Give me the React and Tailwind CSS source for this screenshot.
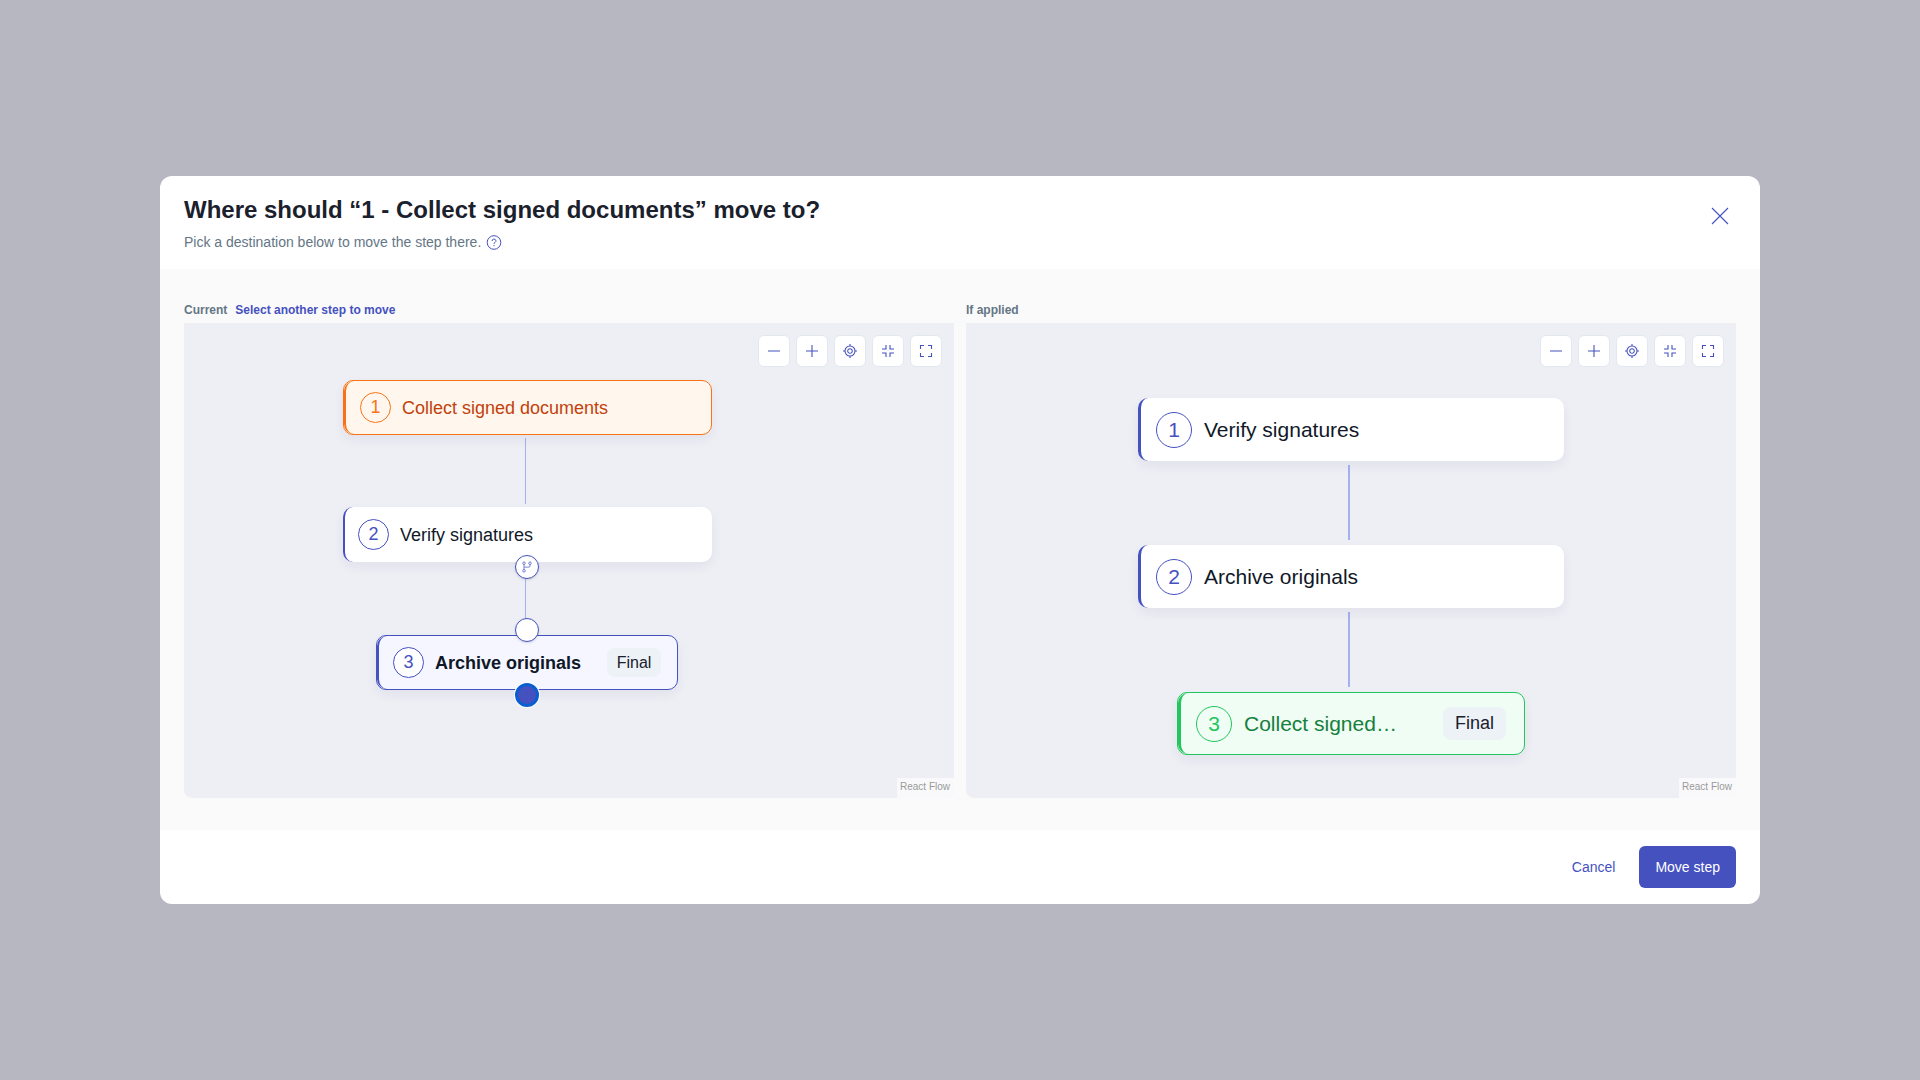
import React from 'react';
import { clsx } from 'clsx';

const tones = {
  default: {
    box: 'bg-white',
    bar: 'border-[#4551bf]',
    number: 'border-[#4551bf] text-[#4551bf] bg-white',
    label: 'text-[#101828]',
  },
  source: {
    box: 'border border-[#f97316] bg-[#fff7ed]',
    bar: 'border-[#f97316]',
    number: 'border-[#f97316] text-[#f97316]',
    label: 'text-[#c2410c]',
  },
  target: {
    box: 'border border-[#4551bf] bg-[#f5f6ff]',
    bar: 'border-[#4551bf]',
    number: 'border-[#4551bf] text-[#4551bf] bg-white',
    label: 'text-[#101828] font-bold',
  },
  result: {
    box: 'border border-[#22c55e] bg-[#f0fdf4]',
    bar: 'border-[#22c55e]',
    number: 'border-[#22c55e] text-[#22c55e]',
    label: 'text-[#15803d]',
  },
};

// className carries the node's place and width on the canvas
const StepNode = ({ number, label, tone = 'default', large, final, className }) => {
  const t = tones[tone];

  return (
    <div
      className={clsx(
        'absolute rounded-[10px] shadow-[0_5px_12px_rgba(30,35,70,0.06)]',
        large ? 'h-[63px]' : 'h-[55px]',
        t.box,
        className
      )}
    >
      <div
        className={clsx(
          'flex h-full items-center rounded-[10px]',
          large ? 'gap-3 border-l-3 pl-[15px] pr-[18px]' : 'gap-[11px] border-l-2 pr-4',
          !large && (tone === 'default' ? 'pl-[13px]' : 'pl-[14px]'),
          t.bar
        )}
      >
        <span
          className={clsx(
            'flex shrink-0 items-center justify-center rounded-full border',
            large ? 'size-9 text-[21px]' : 'size-[31px] text-[18px]',
            t.number
          )}
        >
          {number}
        </span>
        <span className={clsx('whitespace-nowrap', large ? 'text-[21px]' : 'pt-0.5 text-[18px]', t.label)}>{label}</span>
        {final && (
          <span
            className={clsx(
              'ml-auto flex items-center justify-center rounded-lg bg-[#edf2f7] text-[#1a202c]',
              large ? 'h-[33px] w-[63px] text-[18px]' : 'h-[29px] w-[54px] text-[16px]'
            )}
          >
            Final
          </span>
        )}
      </div>
    </div>
  );
};

const Edge = ({ className }) => <div className={clsx('absolute bg-[#a5b0f3]', className)} />;

const controls = [
  { label: 'Zoom out', d: 'M2 8h12' },
  { label: 'Zoom in', d: 'M2 8h12M8 2v12' },
  {
    label: 'Center view',
    d: 'M8 3a5 5 0 1 0 0 10a5 5 0 1 0 0-10M8 5.7a2.3 2.3 0 1 0 0 4.6a2.3 2.3 0 1 0 0-4.6M8 1v2.5M8 12.5v2.5M1 8h2.5M12.5 8h2.5',
  },
  { label: 'Collapse', d: 'M6 2v4H2M10 2v4h4M6 14v-4H2M10 14v-4h4' },
  { label: 'Fit to view', d: 'M6 2.5H2.5V6M10 2.5h3.5V6M6 13.5H2.5V10M10 13.5h3.5V10' },
];

const Toolbar = () => (
  <div className="flex justify-end gap-1.5 p-3">
    {controls.map((c) => (
      <button
        key={c.label}
        type="button"
        aria-label={c.label}
        className="flex size-8 items-center justify-center rounded-md border border-[#e2e8f0] bg-white text-[#4551bf]"
      >
        <svg width="16" height="16" viewBox="0 0 16 16" fill="none" stroke="currentColor" strokeWidth="1.1">
          <path d={c.d} />
        </svg>
      </button>
    ))}
  </div>
);

const Canvas = ({ children }) => (
  <div className="relative flex h-[475px] flex-col justify-between overflow-hidden rounded-b-lg bg-[#eeeff5]">
    <Toolbar />
    {children}
    <a href="#" className="self-end bg-[#f9f9fb] pb-1 pl-[3px] pr-1 pt-0.5 text-[10px] leading-[14px] text-[#999]">
      React Flow
    </a>
  </div>
);

const handle = 'absolute flex size-6 items-center justify-center rounded-full';

const App = () => (
  <div className="flex min-h-screen items-center justify-center bg-[#b7b7c1] px-40 font-['Liberation_Sans',Arial,sans-serif]">
    <div role="dialog" aria-labelledby="move-title" className="w-full rounded-xl bg-white">
      <header className="flex items-start justify-between border-b border-white px-6 py-4">
        <div>
          <h2 id="move-title" className="text-[24px] font-bold leading-9 text-[#1a202c]">
            Where should “1 - Collect signed documents” move to?
          </h2>
          <p className="mt-1 flex items-center gap-[5px] text-[14px] leading-5 text-[#647685]">
            Pick a destination below to move the step there.
            <svg width="16" height="16" viewBox="0 0 16 16" fill="none" stroke="#4551bf" strokeWidth="1">
              <circle cx="8" cy="8.5" r="6.8" />
              <path d="M6.1 7a1.9 1.9 0 1 1 2.8 1.6c-.6.3-.9.6-.9 1.3" />
              <path d="M8 11v1.1" />
            </svg>
          </p>
        </div>
        <button type="button" aria-label="Close" className="mt-2 flex size-8 items-center justify-center text-[#4551bf]">
          <svg width="18" height="18" viewBox="0 0 18 18" stroke="currentColor" strokeWidth="1.1">
            <path d="M1 1l16 16M17 1L1 17" />
          </svg>
        </button>
      </header>

      <main className="grid grid-cols-2 gap-3 bg-[#fafafa] px-6 py-8">
        <section>
          <div className="mb-1 flex gap-2 text-[12px] font-bold leading-[18px]">
            <span className="text-[#647685]">Current</span>
            <button type="button" className="text-[#4551bf]">Select another step to move</button>
          </div>
          <Canvas>
            <Edge className="left-[341px] top-[115px] h-[66px] w-px" />
            <Edge className="left-[341px] top-[242px] h-[66px] w-px" />
            <StepNode number={1} label="Collect signed documents" tone="source" className="left-[159px] top-[57px] w-[369px]" />
            <StepNode number={2} label="Verify signatures" className="left-[159px] top-[184px] w-[369px]" />
            <StepNode number={3} label="Archive originals" tone="target" final className="left-[192px] top-[312px] w-[302px]" />
            <button type="button" aria-label="Move into branch" className={clsx(handle, 'left-[331px] top-[232px] border border-[#4551bf] bg-white shadow-sm')}>
              <svg width="12" height="12" viewBox="0 0 12 12" fill="none" stroke="#4551bf" strokeWidth="0.7">
                <circle cx="3" cy="2.2" r="1.3" />
                <circle cx="3" cy="9.8" r="1.3" />
                <circle cx="9" cy="2.2" r="1.3" />
                <path d="M3 3.5v5M9 3.5v1.6q0 1-1 1H3" />
              </svg>
            </button>
            <button type="button" aria-label="Move before step 3" className={clsx(handle, 'left-[331px] top-[295px] border border-[#4551bf] bg-white shadow-sm')} />
            <button type="button" aria-label="Move after step 3" className={clsx(handle, 'left-[331px] top-[360px] border-3 border-[#0a5fd0] bg-[#4551bf] ring-1 ring-white')} />
          </Canvas>
        </section>
        <section>
          <div className="mb-1 text-[12px] font-bold leading-[18px] text-[#647685]">If applied</div>
          <Canvas>
            <Edge className="left-[382px] top-[142px] h-[75px] w-0.5" />
            <Edge className="left-[382px] top-[289px] h-[75px] w-0.5" />
            <StepNode large number={1} label="Verify signatures" className="left-[172px] top-[75px] w-[426px]" />
            <StepNode large number={2} label="Archive originals" className="left-[172px] top-[222px] w-[426px]" />
            <StepNode large number={3} label="Collect signed…" tone="result" final className="left-[211px] top-[369px] w-[348px]" />
          </Canvas>
        </section>
      </main>

      <footer className="flex items-center justify-end gap-6 px-6 py-4 text-[14px]">
        <button type="button" className="text-[#4551bf]">Cancel</button>
        <button type="button" className="h-[42px] rounded-md bg-[#4551bf] px-4 text-white">Move step</button>
      </footer>
    </div>
  </div>
);

export default App;
